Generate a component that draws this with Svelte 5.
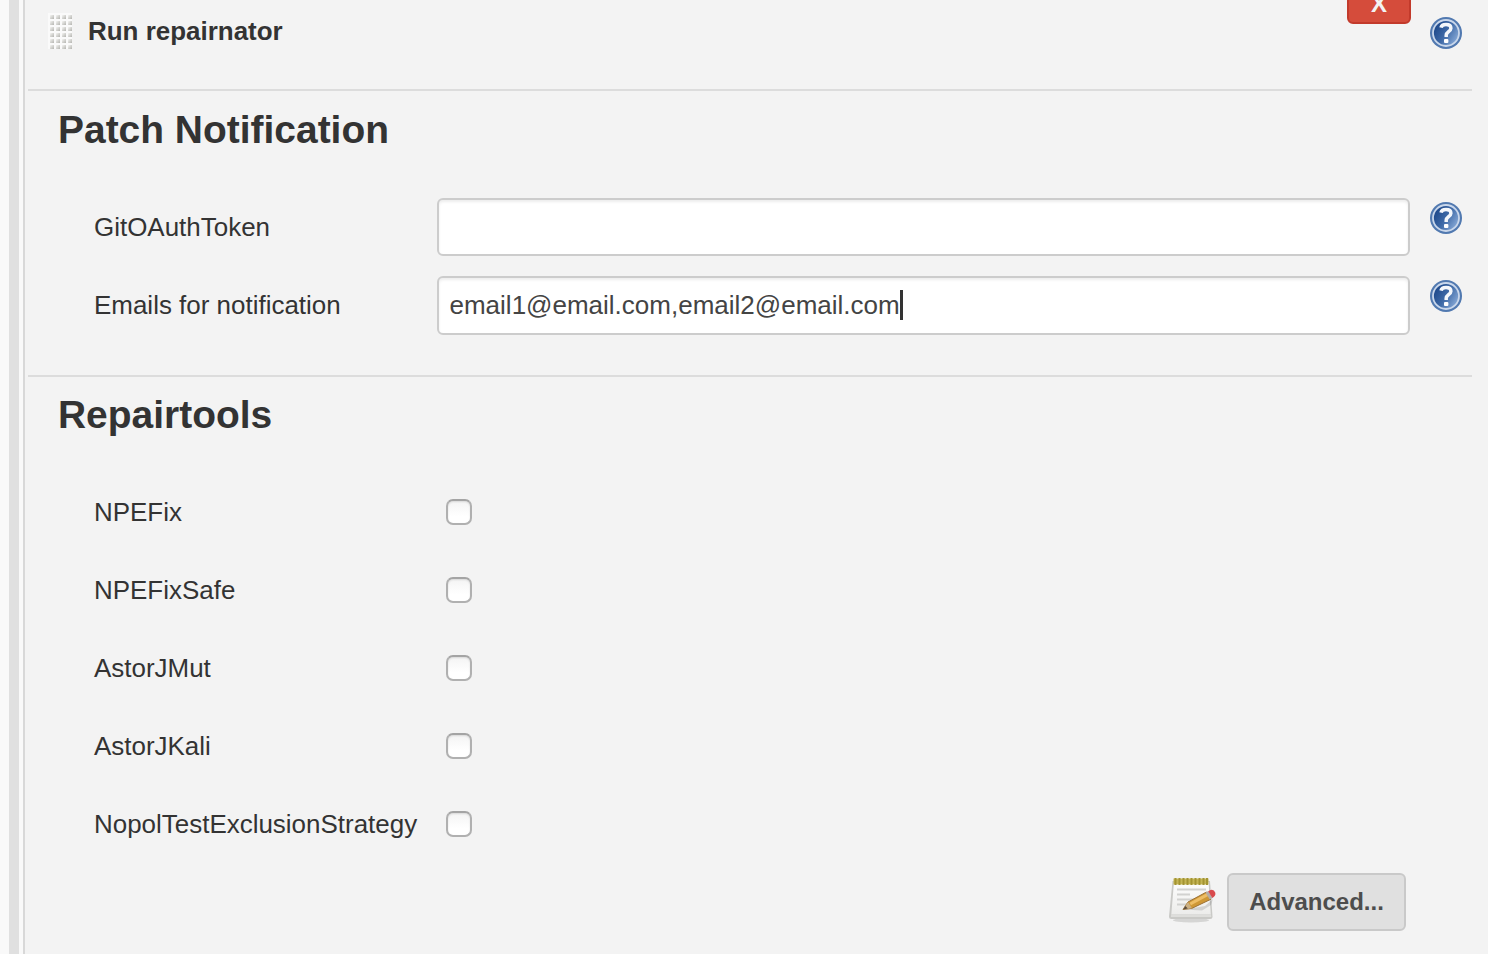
<script>
  let token = $state('');
  const emails = 'email1@email.com,email2@email.com';
  let tools = $state([
    { name: 'NPEFix', on: false },
    { name: 'NPEFixSafe', on: false },
    { name: 'AstorJMut', on: false },
    { name: 'AstorJKali', on: false },
    { name: 'NopolTestExclusionStrategy', on: false }
  ]);
</script>

{#snippet help()}
  <svg class="help" viewBox="0 0 32 32" role="img" aria-label="Help">
    <defs>
      <linearGradient id="disc" x1="0" y1="0.2" x2="1" y2="0.8">
        <stop offset="0.1" stop-color="#1f4a8c" />
        <stop offset="0.5" stop-color="#3f6aa7" />
        <stop offset="1" stop-color="#8fb0dc" />
      </linearGradient>
    </defs>
    <circle cx="16" cy="16" r="16" fill="#5179b0" />
    <circle cx="16" cy="16" r="13" fill="url(#disc)" stroke="#c9d7eb" stroke-width="1.8" />
    <path d="M11 10.700c.5-2.300 2.500-3.100 5-3.100 3.100 0 4.900 1.300 4.900 3.700 0 3.300-4.700 3.600-4.700 7v1.800" fill="none" stroke="#f4f7fb" stroke-width="3.500" />
    <rect x="14" y="22" width="4.400" height="4" rx="1" fill="#fff" />
  </svg>
{/snippet}

<main>
  <div class="rail"></div>
  <div class="panel">
    <header>
      <svg class="grip" viewBox="0 0 24 36" aria-hidden="true">
        <defs>
          <linearGradient id="dot" x1="0" y1="0" x2="1" y2="1">
            <stop offset="0" stop-color="#f6f6f4" />
            <stop offset="1" stop-color="#b4b4b0" />
          </linearGradient>
          <pattern id="dots" width="6" height="6" patternUnits="userSpaceOnUse">
            <rect width="6" height="6" fill="#fafafa" />
            <rect x="2" y="2" width="4" height="4" fill="url(#dot)" />
          </pattern>
        </defs>
        <rect width="24" height="36" fill="url(#dots)" />
      </svg>
      <strong>Run repairnator</strong>
      <button class="delete">X</button>
      {@render help()}
    </header>

    <section class="notify">
      <h2>Patch Notification</h2>
      <div class="row">
        <label for="token">GitOAuthToken</label>
        <input id="token" class="field" bind:value={token} />
        {@render help()}
      </div>
      <div class="row">
        <span>Emails for notification</span>
        <div class="field emails">{emails}<i class="caret"></i></div>
        {@render help()}
      </div>
    </section>

    <section class="tools">
      <h2>Repairtools</h2>
      {#each tools as tool, i}
        <div class="row">
          <label for="tool{i}">{tool.name}</label>
          <input id="tool{i}" type="checkbox" bind:checked={tool.on} />
        </div>
      {/each}
      <footer>
        <svg class="note" viewBox="0 0 48 48" aria-hidden="true">
          <defs>
            <linearGradient id="paper" x1="0" y1="0" x2="0" y2="1">
              <stop offset="0" stop-color="#fdfdfd" />
              <stop offset="1" stop-color="#ececea" />
            </linearGradient>
          </defs>
          <ellipse cx="22" cy="44.2" rx="18" ry="2.2" fill="#c8c8c6" opacity=".7" />
          <path d="M3.5 5h37.500l2.500 35.500q0 2.500-2.500 2.500H2.500q-2.500 0-2.500-2.500z" fill="#c9c9c6" />
          <path d="M5 6h34.500l2.300 32.500H2.300z" fill="url(#paper)" />
          <path d="M2.200 38.500h39.800l.3 2.500H1.900z" fill="#dededb" />
          <path d="M8 13.500h29M8 18.500h13M8 23.500h27M8 28.500h10" stroke="#d2d2d0" stroke-width="2" />
          <rect x="4.500" y="2.500" width="35" height="6" fill="#c4b554" />
          <path d="M6.500 2v7M10.500 2v7M14.500 2v7M18.500 2v7M22.500 2v7M26.500 2v7M30.500 2v7M34.500 2v7M38 2v7" stroke="#a39432" stroke-width="2" />
          <path d="M16 33.500l20-3.500 8-7-2 6-9 5.500z" fill="#777" opacity=".25" />
          <path d="M14 33.500l5-7.500L37.500 16l4.500 7.200L23 32.300z" fill="#cf9836" stroke="#9c7136" stroke-width="1" />
          <path d="M20.500 26.700L38 17.100l1.700 2.700L22 29.200z" fill="#edbd65" />
          <path d="M14 33.500l5-7.500 4 6.300z" fill="#cbb083" />
          <path d="M14 33.500l2.300-3.500 2.500 2.500z" fill="#5b4c3c" />
          <path d="M36.500 16.600l2.800-1.500 4.300 6.900-2.900 1.500z" fill="#b5aca6" />
          <path d="M39.200 15.200l2.300-1.200q3.500-.8 4.800 2.700.8 2.900-2.900 5.200z" fill="#d94a4c" />
        </svg>
        <button class="advanced">Advanced...</button>
      </footer>
    </section>
  </div>
</main>

<style>
  :global(body) {
    margin: 0;
    background: #f9f9f9;
  }
  main {
    display: flex;
    height: 954px;
    overflow: hidden;
    box-sizing: border-box;
    padding-left: 9px;
    font: 25.96px/30px "Liberation Sans", Arial, sans-serif;
    color: #333;
  }
  .rail {
    width: 10px;
    margin-right: 4px;
    background: #e0e0e0;
  }
  .panel {
    flex: 1;
    box-sizing: border-box;
    border-left: 2px solid #d8d8d8;
    padding: 0 16px 0 3px;
    background: #f3f3f3;
  }
  header {
    display: flex;
    align-items: flex-start;
    height: 89px;
    padding: 0 10px 0 20px;
    box-sizing: border-box;
  }
  .grip {
    width: 24px;
    height: 36px;
    margin: 13px 16px 0 0;
  }
  strong {
    margin-top: 16px;
  }
  button {
    box-sizing: border-box;
    font: bold 24px/28px "Liberation Sans", Arial, sans-serif;
    border-radius: 6px;
    padding: 0;
  }
  .delete {
    width: 64px;
    height: 58px;
    margin: -34px 19px 0 auto;
    background: #d54c3b;
    border: 2px solid #c23a2b;
    color: #f3f3f3;
    padding: 17px 0 0;
    line-height: 20px;
  }
  .help {
    display: block;
    flex: none;
    width: 32px;
    height: 32px;
  }
  header .help {
    margin-top: 17px;
  }
  section {
    border-top: 2px solid #dcdcdc;
    box-sizing: border-box;
  }
  .notify {
    height: 286px;
  }
  h2 {
    margin: 0;
    padding: 17px 0 36px 30px;
    height: 97px;
    box-sizing: border-box;
    font-size: 38.95px;
    line-height: 44px;
  }
  .tools h2 {
    height: 96px;
    padding-top: 16px;
  }
  .row {
    display: grid;
    grid-template-columns: 343px 973px 32px;
    align-items: center;
    height: 78px;
    padding-left: 66px;
  }
  .row .help {
    margin: -18px 0 0 20px;
  }
  .field {
    box-sizing: border-box;
    width: 973px;
    height: 58px;
    padding: 0 10.5px;
    border: 2px solid #ccc;
    border-radius: 6px;
    background: #fff;
    box-shadow: inset 0 2px 3px rgba(0, 0, 0, 0.075);
    display: flex;
    align-items: center;
    font: inherit;
    font-size: 26px;
    color: #444;
    outline: none;
  }
  .emails {
    height: 59px;
    margin-top: 1px;
    padding-bottom: 1px;
  }
  .caret {
    width: 3px;
    height: 30px;
    background: #333;
  }
  input[type='checkbox'] {
    appearance: none;
    box-sizing: border-box;
    width: 26px;
    height: 26px;
    margin: -1px 0 0 9px;
    border: 2px solid #b0b0b0;
    border-top-color: #a4a4a4;
    border-radius: 7px;
    background: linear-gradient(#f4f4f4, #fff 70%);
    box-shadow: inset 0 1px 2px rgba(0, 0, 0, 0.12);
  }
  footer {
    display: flex;
    justify-content: flex-end;
    align-items: flex-start;
    padding: 10px 66px 0 0;
  }
  .note {
    width: 48px;
    height: 48px;
    margin: 3px 10px 0 0;
  }
  .advanced {
    width: 179px;
    height: 58px;
    background: #e0e0e0;
    border: 2px solid #c9c9c9;
    color: #4d4d4d;
  }
</style>
